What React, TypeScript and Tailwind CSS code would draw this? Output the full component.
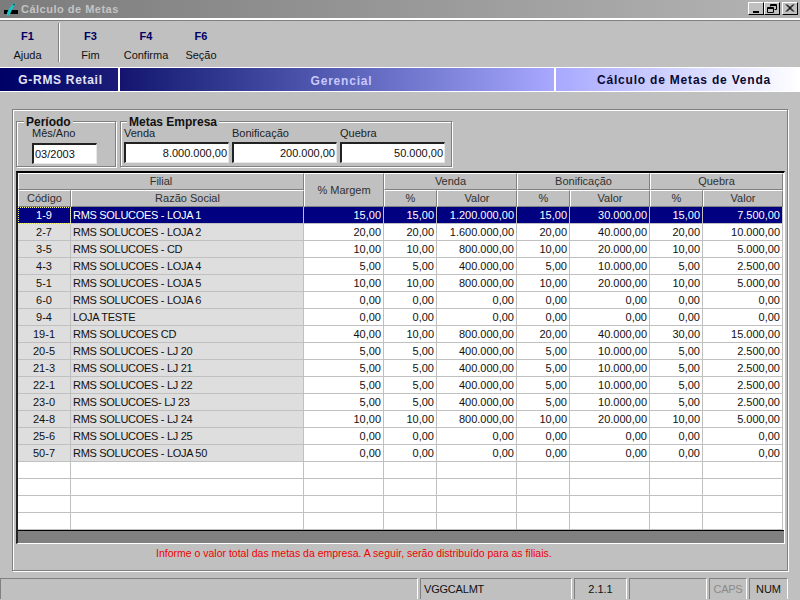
import { Fragment } from "react";

type Row = [string, string, string, string, string, string, string, string, string];

const rows: Row[] = [
  ["1-9", "RMS SOLUCOES - LOJA 1", "15,00", "15,00", "1.200.000,00", "15,00", "30.000,00", "15,00", "7.500,00"],
  ["2-7", "RMS SOLUCOES - LOJA 2", "20,00", "20,00", "1.600.000,00", "20,00", "40.000,00", "20,00", "10.000,00"],
  ["3-5", "RMS SOLUCOES - CD", "10,00", "10,00", "800.000,00", "10,00", "20.000,00", "10,00", "5.000,00"],
  ["4-3", "RMS SOLUCOES - LOJA 4", "5,00", "5,00", "400.000,00", "5,00", "10.000,00", "5,00", "2.500,00"],
  ["5-1", "RMS SOLUCOES - LOJA 5", "10,00", "10,00", "800.000,00", "10,00", "20.000,00", "10,00", "5.000,00"],
  ["6-0", "RMS SOLUCOES - LOJA 6", "0,00", "0,00", "0,00", "0,00", "0,00", "0,00", "0,00"],
  ["9-4", "LOJA TESTE", "0,00", "0,00", "0,00", "0,00", "0,00", "0,00", "0,00"],
  ["19-1", "RMS SOLUCOES CD", "40,00", "10,00", "800.000,00", "20,00", "40.000,00", "30,00", "15.000,00"],
  ["20-5", "RMS SOLUCOES - LJ 20", "5,00", "5,00", "400.000,00", "5,00", "10.000,00", "5,00", "2.500,00"],
  ["21-3", "RMS SOLUCOES - LJ 21", "5,00", "5,00", "400.000,00", "5,00", "10.000,00", "5,00", "2.500,00"],
  ["22-1", "RMS SOLUCOES - LJ 22", "5,00", "5,00", "400.000,00", "5,00", "10.000,00", "5,00", "2.500,00"],
  ["23-0", "RMS SOLUCOES- LJ 23", "5,00", "5,00", "400.000,00", "5,00", "10.000,00", "5,00", "2.500,00"],
  ["24-8", "RMS SOLUCOES - LJ 24", "10,00", "10,00", "800.000,00", "10,00", "20.000,00", "10,00", "5.000,00"],
  ["25-6", "RMS SOLUCOES - LJ 25", "0,00", "0,00", "0,00", "0,00", "0,00", "0,00", "0,00"],
  ["50-7", "RMS SOLUCOES - LOJA 50", "0,00", "0,00", "0,00", "0,00", "0,00", "0,00", "0,00"],
];

const head = "flex items-center justify-center border-t border-l border-t-white border-l-white border-r border-b border-r-[#808080] border-b-[#808080] bg-[#c0c0c0] text-[#303030]";
const winBtn = "w-[16px] h-[13px] bg-[#c0c0c0] border-t border-l border-white border-r border-b border-r-black border-b-black";
const sunken = "h-[21px] bg-white border-t-2 border-l-2 border-t-[#222] border-l-[#222] border-r border-b border-r-[#e8e8e8] border-b-[#e8e8e8] flex items-center text-[11px] text-[#111]";

function FKey({ k, label, w }: { k: string; label: string; w: string }) {
  return (
    <div className={`flex flex-col items-center ${w}`}>
      <span className="text-[11px] font-bold leading-[14px] text-[#000066] mt-[6px]">{k}</span>
      <span className="text-[11px] leading-[14px] mt-[5px] text-[#111]">{label}</span>
    </div>
  );
}

function Field({ label, value, w }: { label: string; value: string; w: string }) {
  return (
    <div className={w}>
      <div className="text-[11px] leading-[13px] text-[#222] h-[13px]">{label}</div>
      <div className={`${sunken} mt-[3px] justify-end pr-[1px]`}>{value}</div>
    </div>
  );
}

function Status({ w, children, dim }: { w: string; children?: React.ReactNode; dim?: boolean }) {
  return (
    <div className={`${w} h-[21px] flex items-center border-t border-l border-t-[#808080] border-l-[#808080] border-r border-r-white text-[11px] ${dim ? "text-[#8a8a8a]" : "text-[#111]"}`}>
      {children}
    </div>
  );
}

export default function App() {
  return (
    <div className="w-[800px] h-[600px] overflow-hidden bg-[#c0c0c0] font-['Liberation_Sans',sans-serif] flex flex-col">
      {/* title bar */}
      <div className="h-[18px] flex items-center bg-gradient-to-r from-[#7c7c7c] to-[#b4b4b4]">
        <svg width="18" height="14" viewBox="0 0 18 14" className="ml-[2px] shrink-0">
          <path d="M2 8h14v4H2z" fill="#000" />
          <path d="M5 14c-1-3 2-8 6-12l2-1 1 1-2 2-2 4c-1 2-2 4-2 5z" fill="#19c4c4" />
          <path d="M11 3l2-1" stroke="#004040" strokeWidth="1" />
        </svg>
        <span className="ml-[1px] text-[11px] font-bold tracking-[0.5px] text-[#c4c4c4]">Cálculo de Metas</span>
        <div className="ml-auto flex mr-[2px] mb-[1px]">
          <div className={`${winBtn} flex items-end justify-center pb-[1px]`}>
            <div className="w-[6px] h-[2px] bg-black" />
          </div>
          <div className={winBtn}>
            <svg width="14" height="11" viewBox="0 0 14 11">
              <path d="M5.5 1.5h6v5h-2M5.5 1.5v2M5 2.5h6.5" fill="none" stroke="#000" />
              <path d="M2.5 4.5h6v5h-6zM2 5.5h7" fill="none" stroke="#000" />
            </svg>
          </div>
          <div className={`${winBtn} ml-[2px]`}>
            <svg width="14" height="11" viewBox="0 0 14 11">
              <path d="M3 1.5l7 7M4 1.5l7 7M10 1.5l-7 7M11 1.5l-7 7" fill="none" stroke="#000" />
            </svg>
          </div>
        </div>
      </div>
      <div className="h-[3px] border-t-2 border-b border-t-white border-b-[#808080]" />

      {/* function keys */}
      <div className="h-[46px] flex items-start pt-[2px]">
        <FKey k="F1" label="Ajuda" w="w-[55px]" />
        <div className="w-[2px] h-[39px] border-l border-r border-l-[#808080] border-r-white ml-[3px]" />
        <FKey k="F3" label="Fim" w="w-[61px]" />
        <FKey k="F4" label="Confirma" w="w-[48px] ml-[1px]" />
        <FKey k="F6" label="Seção" w="w-[48px] ml-[7px]" />
      </div>

      {/* banner */}
      <div className="h-[25px] flex border-y border-white text-[12px] font-bold">
        <div className="w-[120px] bg-gradient-to-r from-[#000066] to-[#1c1c78] text-[#e4e4f4] border-r-2 border-white flex items-center justify-center pl-[3px] tracking-[0.7px]">
          G-RMS Retail
        </div>
        <div className="w-[436px] bg-gradient-to-r from-[#14146e] to-[#a8a8ff] border-r-2 border-white flex items-center justify-center pl-[9px] pt-[2px] text-[#c8c8ff] tracking-[0.8px]">
          Gerencial
        </div>
        <div className="flex-1 bg-gradient-to-r from-[#a8a8ff] to-white flex items-center pl-[41px] text-[#0a0a30] tracking-[0.8px]">
          Cálculo de Metas de Venda
        </div>
      </div>

      {/* main panel */}
      <div className="mt-[17px] ml-[12px] w-[776px] h-[462px] border border-[#808080] shadow-[inset_1px_1px_0_#fff,1px_1px_0_#fff] pt-[11px] pl-[3px]">
        <div className="flex gap-[4px]">
          <div className="relative w-[100px] h-[46px] border border-[#808080] shadow-[inset_1px_1px_0_#fff,1px_1px_0_#fff]">
            <span className="absolute -top-[6px] left-[7px] bg-[#c0c0c0] px-[2px] text-[12px] leading-[13px] font-bold text-[#111]">Período</span>
            <div className="absolute left-[15px] top-[5px] text-[11px] leading-[13px] text-[#222]">Mês/Ano</div>
            <div className={`${sunken} absolute left-[15px] top-[21px] w-[65px] pl-[1px]`}>03/2003</div>
          </div>
          <div className="relative w-[332px] h-[46px] border border-[#808080] shadow-[inset_1px_1px_0_#fff,1px_1px_0_#fff] pt-[5px] pl-[3px] flex gap-[3px]">
            <span className="absolute -top-[6px] left-[6px] bg-[#c0c0c0] px-[2px] text-[12px] leading-[13px] font-bold text-[#111]">Metas Empresa</span>
            <div className="contents [&_.mt-\[3px\]]:mt-[2px]">
              <Field label="Venda" value="8.000.000,00" w="w-[105px]" />
              <Field label="Bonificação" value="200.000,00" w="w-[105px]" />
              <Field label="Quebra" value="50.000,00" w="w-[105px]" />
            </div>
          </div>
        </div>

        {/* grid */}
        <div className="mt-[4px] w-[769px] h-[373px] border-t-2 border-l-2 border-t-black border-l-[#222] border-r border-b border-r-white border-b-white bg-[#808080] text-[11px] flex flex-col">
          <div className="grid grid-cols-[53px_233px_80px_53px_80px_53px_80px_53px_80px] auto-rows-[17px] bg-white">
            <div className={`${head} col-span-2`}>Filial</div>
            <div className={`${head} row-span-2`}>% Margem</div>
            <div className={`${head} col-span-2`}>Venda</div>
            <div className={`${head} col-span-2`}>Bonificação</div>
            <div className={`${head} col-span-2`}>Quebra</div>
            <div className={head}>Código</div>
            <div className={head}>Razão Social</div>
            <div className={head}>%</div>
            <div className={head}>Valor</div>
            <div className={head}>%</div>
            <div className={head}>Valor</div>
            <div className={head}>%</div>
            <div className={head}>Valor</div>

            {rows.map((row, i) => {
              const sel = i === 0;
              const line = "border-r border-b border-[#c0c0c0] flex items-center";
              const fixedBg = sel ? "bg-[#000080] text-white" : "bg-[#dedede] text-[#111]";
              const valBg = sel ? "bg-[#000080] text-white" : "bg-white text-[#111]";
              return (
                <Fragment key={row[0]}>
                  <div className={`${line} justify-center ${fixedBg} ${sel ? "outline-1 -outline-offset-1 outline-dotted outline-[#ffff80]" : ""}`}>{row[0]}</div>
                  <div className={`${line} pl-[2px] tracking-[-0.3px] ${fixedBg}`}>{row[1]}</div>
                  {row.slice(2).map((v, j) => (
                    <div key={j} className={`${line} justify-end pr-[2px] ${valBg}`}>{v}</div>
                  ))}
                </Fragment>
              );
            })}

            {[0, 1, 2, 3].map((r) => (
              <Fragment key={r}>
                {[0, 1, 2, 3, 4, 5, 6, 7, 8].map((c) => (
                  <div key={c} className="border-r border-b border-[#c0c0c0] bg-white" />
                ))}
              </Fragment>
            ))}
          </div>
          <div className="border-t border-black flex-1" />
        </div>

        <div className="mt-[3px] ml-[140px] text-[10.5px] leading-[13px] text-[#f00000] whitespace-nowrap">
          Informe o valor total das metas da empresa. A seguir, serão distribuído para as filiais.
        </div>
      </div>

      {/* status bar */}
      <div className="mt-[7px] flex gap-[2px] pr-[12px]">
        <Status w="w-[418px]" />
        <Status w="w-[152px] pl-[3px] tracking-[-0.2px]">VGGCALMT</Status>
        <Status w="w-[53px] justify-center">2.1.1</Status>
        <Status w="w-[78px]" />
        <Status w="w-[38px] justify-center tracking-[-0.3px]" dim>CAPS</Status>
        <Status w="w-[39px] justify-center">NUM</Status>
      </div>
    </div>
  );
}
